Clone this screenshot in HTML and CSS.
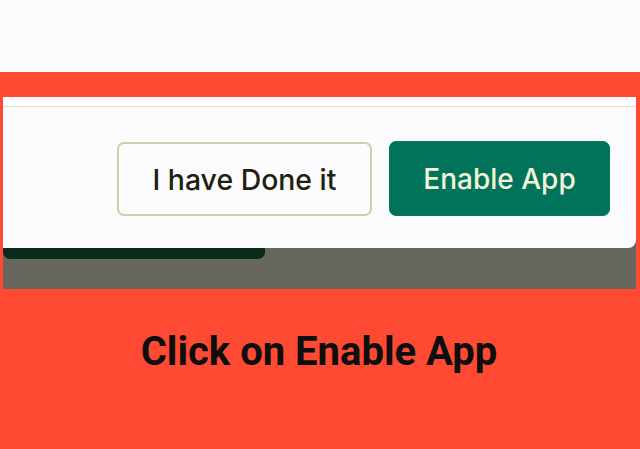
FILE: index.html
```html
<!DOCTYPE html>
<html>
<head>
<meta charset="utf-8">
<link rel="stylesheet" href="styles.css">
</head>
<body>
<div class="top"></div>
<div class="stage">
  <div class="frame">
    <div class="card">
      <div class="strip"></div>
      <div class="actions">
        <button class="btn btn-ghost">I have Done it</button>
        <button class="btn btn-primary">Enable App</button>
      </div>
    </div>
    <div class="bar"></div>
  </div>
  <div class="caption">Click on Enable App</div>
</div>
</body>
</html>
```
FILE: styles.css
```css
html, body { margin: 0; padding: 0; }
body { width: 640px; height: 449px; overflow: hidden; background: #fcfcfe; }
.top { height: 72px; background: #fcfcfe; }
.stage {
  height: 377px;
  background: #fe4a33;
  padding: 25px 4px 0 3px;
  box-sizing: border-box;
}
.frame {
  height: 192px;
  background: #67675e;
  display: flex;
  flex-direction: column;
}
.card {
  height: 151px;
  background: #fcfcfe;
  border-radius: 0 0 8px 0;
  display: flex;
  flex-direction: column;
}
.strip { height: 9px; border-bottom: 1px solid #e4e2c4; }
.actions {
  display: flex;
  justify-content: flex-end;
  gap: 17px;
  padding: 34px 26px 0 0;
}
.btn {
  font-family: "Inter", "Liberation Sans", sans-serif;
  font-size: 28px;
  font-weight: 500;
  height: 75px;
  border-radius: 7px;
  box-sizing: border-box;
  display: flex;
  align-items: center;
  justify-content: center;
  padding: 0;
}
.btn-ghost {
  width: 255px;
  background: #fcfcfe;
  border: 2px solid #cfcfa9;
  color: #1f2010;
  margin-top: 1px;
  height: 74px;
  font-size: 28.4px;
}
.btn-primary {
  width: 221px;
  background: #00735a;
  border: 1px solid #067a5c;
  color: #f2f3d8;
}
.bar {
  width: 262px;
  height: 11px;
  background: #0a2a1c;
  border-radius: 0 0 7px 7px;
}
.caption {
  margin-top: 39px;
  text-align: center;
  font-family: "Roboto", "Liberation Sans", sans-serif;
  font-weight: 700;
  font-size: 40px;
  color: #0e0e0e;
  padding-right: 1px;
}
```
